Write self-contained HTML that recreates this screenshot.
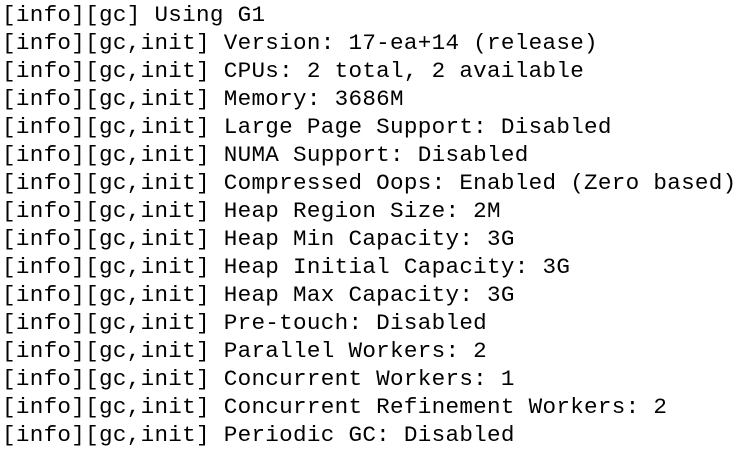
<!DOCTYPE html>
<html><head><meta charset="utf-8"><style>
html,body{margin:0;padding:0;background:#fff;width:740px;height:446px;overflow:hidden}
pre{margin:0;padding:0;position:absolute;left:2px;top:1px;font-family:"Liberation Mono",monospace;font-size:22.6px;letter-spacing:0.3px;line-height:28px;color:#000}
</style></head><body><pre>[info][gc] Using G1
[info][gc,init] Version: 17-ea+14 (release)
[info][gc,init] CPUs: 2 total, 2 available
[info][gc,init] Memory: 3686M
[info][gc,init] Large Page Support: Disabled
[info][gc,init] NUMA Support: Disabled
[info][gc,init] Compressed Oops: Enabled (Zero based)
[info][gc,init] Heap Region Size: 2M
[info][gc,init] Heap Min Capacity: 3G
[info][gc,init] Heap Initial Capacity: 3G
[info][gc,init] Heap Max Capacity: 3G
[info][gc,init] Pre-touch: Disabled
[info][gc,init] Parallel Workers: 2
[info][gc,init] Concurrent Workers: 1
[info][gc,init] Concurrent Refinement Workers: 2
[info][gc,init] Periodic GC: Disabled</pre></body></html>
